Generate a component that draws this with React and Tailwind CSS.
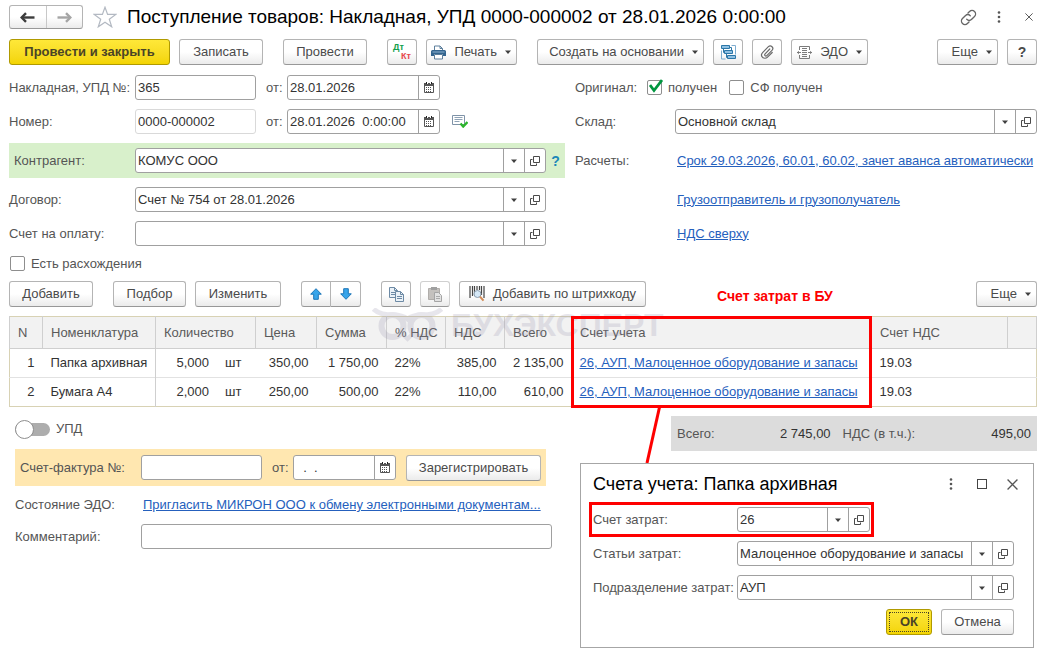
import { useState } from 'react';
import clsx from 'clsx';

const rows = [
    { n: 1, name: 'Папка архивная', qty: '5,000', unit: 'шт', price: '350,00', sum: '1 750,00', rate: '22%', vat: '385,00', total: '2 135,00', account: '26, АУП, Малоценное оборудование и запасы', vatAccount: '19.03' },
    { n: 2, name: 'Бумага А4', qty: '2,000', unit: 'шт', price: '250,00', sum: '500,00', rate: '22%', vat: '110,00', total: '610,00', account: '26, АУП, Малоценное оборудование и запасы', vatAccount: '19.03' },
];

const columns = [
    { title: 'N', width: 'w-[33px]' },
    { title: 'Номенклатура', width: 'w-[113px]' },
    { title: 'Количество', width: 'w-[100px]' },
    { title: 'Цена', width: 'w-[61px]' },
    { title: 'Сумма', width: 'w-[70px]' },
    { title: '% НДС', width: 'w-[59px]' },
    { title: 'НДС', width: 'w-[59px]' },
    { title: 'Всего', width: 'w-[67px]' },
    { title: 'Счет учета', width: '' },
    { title: 'Счет НДС', width: 'w-[136px]' },
    { title: '', width: 'w-[29px]' },
];

/* ---------- icons ---------- */

function Caret() {
    return (
        <svg width="6" height="4" viewBox="0 0 6 4" className="shrink-0">
            <path d="M0 0.5h6L3 4z" fill="#404040" />
        </svg>
    );
}

function OpenIcon() {
    return (
        <svg width="10" height="10" viewBox="0 0 10 10" fill="none" stroke="#4a4a4a">
            <path d="M3.5 0.5h6v6h-6z" />
            <path d="M2.500 3.500h-2v6h6v-2" />
        </svg>
    );
}

function CalendarIcon() {
    return (
        <svg width="10" height="11" viewBox="0 0 10 11">
            <path d="M0.5 2.5h9v8h-9z" fill="#fff" stroke="#555" />
            <path d="M0 1h10v3H0z" fill="#555" />
            <path d="M2 0h1v2H2zM7 0h1v2H7z" fill="#222" />
            <path d="M3 1h1v1H3zM6 1h1v1H6z" fill="#fff" />
            <path d="M2 5h1v1H2zM4 5h1v1H4zM6 5h1v1H6zM2 7h1v1H2zM4 7h1v1H4zM6 7h1v1H6zM2 9h1v1H2zM4 9h1v1H4zM6 9h1v1H6z" fill="#555" />
        </svg>
    );
}

function ArrowIcon({ left, color }) {
    return (
        <svg width="15" height="11" viewBox="0 0 15 11" className={clsx(!left && 'rotate-180')} fill="none" stroke={color} strokeWidth="2.4">
            <path d="M2 5.5H14.500" />
            <path d="M6 1.2L1.700 5.500L6 9.800" />
        </svg>
    );
}

function StarIcon() {
    return (
        <svg width="24" height="22" viewBox="0 0 24 22" fill="none" stroke="#b3b9c2" strokeWidth="1.2">
            <path d="M12 1.200l2.600 7.200h8.200l-6.500 4.800 2.400 7.600L12 16.200l-6.700 4.600 2.400-7.600L1.200 8.400h8.200z" />
        </svg>
    );
}

function LinkIcon() {
    return (
        <svg width="17" height="17" viewBox="0 0 24 24" fill="none" stroke="#666" strokeWidth="1.9" strokeLinecap="round">
            <path d="M9.500 14.500a5 5 0 0 0 7 0l4-4a4.900 4.900 0 0 0-7-7l-2.200 2.200" />
            <path d="M14.500 9.500a5 5 0 0 0-7 0l-4 4a4.900 4.900 0 0 0 7 7l2.200-2.200" />
        </svg>
    );
}

function DotsIcon() {
    return (
        <svg width="4" height="12" viewBox="0 0 4 12" fill="#555">
            <circle cx="2" cy="1.500" r="1.300" />
            <circle cx="2" cy="6" r="1.300" />
            <circle cx="2" cy="10.500" r="1.300" />
        </svg>
    );
}

function CloseIcon({ size = 8 }) {
    return (
        <svg width={size} height={size} viewBox="0 0 10 10" stroke="#555" strokeWidth="1.200">
            <path d="M0.500 0.500l9 9M9.500 0.500l-9 9" />
        </svg>
    );
}

function DtKtIcon() {
    return (
        <span className="relative block h-[18px] w-[18px] text-[9px] leading-[9px] font-bold">
            <span className="absolute top-0 left-0 text-[#12a04c]">Дт</span>
            <span className="absolute right-0 bottom-0 text-[#e8474c]">Кт</span>
        </span>
    );
}

function PrinterIcon() {
    return (
        <svg width="15" height="15" viewBox="0 0 15 15" className="shrink-0">
            <path d="M3.500 6V1h5.500l2.500 2.500V6" fill="#fff" stroke="#5d7f9c" />
            <path d="M9 1v2.500h2.500" fill="none" stroke="#5d7f9c" />
            <path d="M1.500 5h12A1.500 1.500 0 0 1 15 6.500V11h-3V9H3v2H0V6.500A1.500 1.500 0 0 1 1.500 5z" fill="#33658f" />
            <path d="M3.500 9.500h8v4.500h-8z" fill="#fff" stroke="#5d7f9c" />
            <path d="M1.500 7h12" stroke="#8fb3d0" />
        </svg>
    );
}

function StructureIcon() {
    return (
        <svg width="15" height="15" viewBox="0 0 15 15" fill="none">
            <path d="M0.500 5.500v8.500h4M10.500 0.500h4v9" stroke="#7eadd0" />
            <path d="M2.500 4v3.500H4M5.500 9v3.500H7M9 2.500h1.500V6" stroke="#2c77a8" />
            <path d="M0.500 0.500h8v3h-8zM3.500 5.500h8v3h-8zM6.500 10.500h8v3h-8z" fill="#8fc0e2" stroke="#2c77a8" />
        </svg>
    );
}

function ClipIcon() {
    return (
        <svg width="14" height="14" viewBox="0 0 14 14" fill="none" stroke="#6a6a6a" strokeWidth="1.200" strokeLinecap="round">
            <path d="M9.800 4L5.100 8.900a1.200 1.200 0 0 0 1.700 1.700L12 5.300a2.500 2.500 0 0 0-3.600-3.600L2.600 7.600a3.300 3.300 0 0 0 4.700 4.700L12.200 7.500" />
        </svg>
    );
}

function EdoIcon() {
    return (
        <svg width="15" height="15" viewBox="0 0 15 15" fill="none" stroke="#7b7b7b" className="shrink-0">
            <path d="M2.500 5V1.500h10V5M2.500 10v3.500h10V10" />
            <path d="M5 3.500h5M5 5.500h5M5 9.500h5M5 11.500h5" />
            <path d="M0 7.500h4M5 7.500h5M11 7.500h4" strokeWidth="1.200" />
            <path d="M2 5.800v3.400L0 7.500zM13 5.800v3.400l2-1.700z" fill="#7b7b7b" stroke="none" />
        </svg>
    );
}

function PostedIcon() {
    return (
        <svg width="16" height="13" viewBox="0 0 16 13" fill="none">
            <path d="M0.500 0.500h12v9h-12z" fill="#fff" stroke="#7f93a8" />
            <path d="M2.500 2.500h8M2.500 4.500h8M2.500 6.500h5" stroke="#8fa2b5" />
            <path d="M8.500 8.500l2.700 3L15.500 7" stroke="#2db52d" strokeWidth="2.400" />
        </svg>
    );
}

function MoveArrow({ down }) {
    return (
        <svg width="12" height="12" viewBox="0 0 12 12" className={clsx(down && 'rotate-180')}>
            <path d="M6 0.700L11.300 6.200H8.300V11.300H3.700V6.200H0.700z" fill="#38a5ea" stroke="#1d76b8" strokeWidth="1" strokeLinejoin="round" />
        </svg>
    );
}

function CopyIcon() {
    return (
        <svg width="17" height="17" viewBox="0 0 17 17" fill="#eaf1f7" stroke="#6d8aa5">
            <path d="M1.500 1.500h5l3 3v7h-8z" />
            <path d="M6.500 1.500v3h3M3 6.500h4M3 8.500h4" fill="none" />
            <path d="M7.500 5.500h5l3 3v7h-8z" />
            <path d="M12.500 5.500v3h3M9 10.500h5M9 12.500h5" fill="none" />
        </svg>
    );
}

function PasteIcon() {
    return (
        <svg width="16" height="16" viewBox="0 0 16 16">
            <path d="M1.500 2.500h11v11h-11z" fill="#c4c1be" stroke="#b0adaa" />
            <path d="M4 1h6v3H4z" fill="#a0a0a0" />
            <path d="M7.500 6.500h4l3 3v6h-7z" fill="#e2e2e2" stroke="#a5a5a5" />
            <path d="M9 10.500h4M9 12.500h4" stroke="#aaa" />
        </svg>
    );
}

function BarcodeIcon() {
    return (
        <svg width="16" height="16" viewBox="0 0 16 16" className="shrink-0">
            <path d="M1 0v12M3.500 0v10M5.500 0v9M8 0v4M10.500 0v4M12.500 0v9M15 0v12" stroke="#444" strokeWidth="1.200" />
            <circle cx="8.500" cy="8" r="3.500" fill="#d5e8f7" stroke="#8a9cad" />
            <path d="M11 10.700l3.500 4" stroke="#d08a55" strokeWidth="2" />
        </svg>
    );
}

function Watermark() {
    return (
        <div aria-hidden="true" className="pointer-events-none absolute -top-2 left-[363px] flex items-start gap-2 text-[#8d87a5] opacity-20">
            <svg width="71" height="34" viewBox="0 0 70 34" fill="none" stroke="currentColor" strokeWidth="6">
                <path d="M1 1c5 5 11 6 20 6 6 0 10 1 14 4 4-3 8-4 14-4 9 0 15-1 20-6" strokeWidth="5" />
                <circle cx="20" cy="18" r="11" />
                <circle cx="49" cy="18" r="11" />
                <path d="M30 26l5 5 5-5" strokeWidth="4" />
            </svg>
            <span className="text-[32px] leading-[34px] font-bold">БУХЭКСПЕРТ</span>
        </div>
    );
}

/* ---------- controls ---------- */

function Button({ children, className, primary, menu, ...props }) {
    return (
        <button
            type="button"
            className={clsx(
                'flex h-[26px] shrink-0 items-center gap-2 rounded-[3px] border leading-[16px] whitespace-nowrap',
                primary
                    ? 'border-[#b09a00] bg-linear-to-b from-[#ffe838] to-[#f3d400] font-bold text-[#4a4426]'
                    : 'border-[#b4b4b4] border-b-[#989898] bg-linear-to-b from-white from-50% to-[#ebebeb] text-[#4a4a4a]',
                menu ? 'justify-end pr-[5px]' : 'justify-center',
                className
            )}
            {...props}
        >
            {children}
            {menu && <Caret />}
        </button>
    );
}

function Field({ label, width = 'w-[126px]', children, id, className }) {
    return (
        <div className={clsx('flex items-center', className)}>
            <label htmlFor={id} className={clsx('shrink-0 whitespace-nowrap', width)}>{label}</label>
            {children}
        </div>
    );
}

function TextInput({ className, ...props }) {
    return (
        <input
            type="text"
            className={clsx('h-[25px] rounded-[3px] border bg-white px-0.5 text-[#333] outline-none', className)}
            {...props}
        />
    );
}

function DateInput({ id, value, className }) {
    return (
        <div className={clsx('flex h-[25px] shrink-0 rounded-[3px] border border-[#a0a0a0] bg-white', className)}>
            <input id={id} type="text" defaultValue={value} className="w-full min-w-0 px-0.5 whitespace-pre text-[#333] outline-none" />
            <button type="button" aria-label="Выбрать дату" className="flex w-[21px] shrink-0 items-center justify-center border-l border-[#a0a0a0]">
                <CalendarIcon />
            </button>
        </div>
    );
}

function SelectInput({ id, value, className }) {
    return (
        <div className={clsx('flex h-[25px] rounded-[3px] border border-[#a0a0a0] bg-white', className)}>
            <div className="relative min-w-0 flex-1">
                <select id={id} defaultValue={value} className="h-full w-full appearance-none px-0.5 text-[#333] outline-none">
                    <option value={value}>{value}</option>
                </select>
                <span className="pointer-events-none absolute inset-y-0 right-0 flex w-[21px] items-center justify-center border-l border-[#a0a0a0]">
                    <Caret />
                </span>
            </div>
            <button type="button" aria-label="Открыть" className="flex w-[21px] shrink-0 items-center justify-center border-l border-[#a0a0a0]">
                <OpenIcon />
            </button>
        </div>
    );
}

function Checkbox({ label, defaultChecked = false }) {
    const [checked, setChecked] = useState(defaultChecked);
    return (
        <label className="flex items-center gap-1.5">
            <span className="relative flex">
                <input
                    type="checkbox"
                    checked={checked}
                    onChange={(e) => setChecked(e.target.checked)}
                    className="h-[15px] w-[15px] appearance-none rounded-[2px] border border-[#8e8e8e] bg-white"
                />
                {checked && (
                    <svg width="14" height="14" viewBox="0 0 14 14" className="pointer-events-none absolute -top-px left-0.5" fill="none" stroke="#00963f" strokeWidth="2.800">
                        <path d="M1 6l4 5.500L13 1" />
                    </svg>
                )}
            </span>
            {label}
        </label>
    );
}

function Link({ children, className }) {
    return <a href="#" className={clsx('text-[#2560bd] underline', className)}>{children}</a>;
}

/* ---------- page parts ---------- */

function TitleBar() {
    return (
        <header className="flex h-6 items-center">
            <div className="flex h-6 w-[74px] rounded-[3px] border border-[#b4b4b4] border-b-[#989898] bg-linear-to-b from-white from-50% to-[#ebebeb]">
                <button type="button" aria-label="Назад" className="flex flex-1 items-center justify-center border-r border-[#c8c8c8]">
                    <ArrowIcon left color="#3c3c3c" />
                </button>
                <button type="button" aria-label="Вперед" className="flex flex-1 items-center justify-center">
                    <ArrowIcon color="#a5a5a5" />
                </button>
            </div>
            <button type="button" aria-label="В избранное" className="mx-2.5">
                <StarIcon />
            </button>
            <h1 className="text-[19px] leading-6 whitespace-nowrap text-black">Поступление товаров: Накладная, УПД 0000-000002 от 28.01.2026 0:00:00</h1>
            <div className="ml-auto flex items-center gap-5 pr-1">
                <button type="button" aria-label="Ссылка"><LinkIcon /></button>
                <button type="button" aria-label="Меню"><DotsIcon /></button>
                <button type="button" aria-label="Закрыть" className="ml-1"><CloseIcon /></button>
            </div>
        </header>
    );
}

function Toolbar() {
    return (
        <div className="mt-2.5 flex items-center gap-5">
            <div className="flex gap-[9px]">
                <Button primary className="w-[161px]">Провести и закрыть</Button>
                <Button className="w-[84px]">Записать</Button>
            </div>
            <Button className="w-[84px]">Провести</Button>
            <div className="flex gap-[9px]">
                <Button className="w-[30px]"><DtKtIcon /></Button>
                <Button menu className="w-[91px]"><PrinterIcon />Печать</Button>
            </div>
            <div className="flex gap-[9px]">
                <Button menu className="w-[167px]">Создать на основании</Button>
                <Button className="w-[30px]" aria-label="Структура подчиненности"><StructureIcon /></Button>
                <Button className="w-[30px]" aria-label="Файлы"><ClipIcon /></Button>
                <Button menu className="w-[77px]"><EdoIcon />ЭДО</Button>
            </div>
            <div className="ml-auto flex gap-[9px]">
                <Button menu className="w-[61px]">Еще</Button>
                <Button className="w-[30px] text-[14px] font-bold">?</Button>
            </div>
        </div>
    );
}

function DocumentForm() {
    return (
        <div className="mt-2.5 flex gap-2.5">
            <div className="flex w-[556px] shrink-0 flex-col gap-[9px]">
                <Field label="Накладная, УПД №:" id="invoice">
                    <TextInput id="invoice" defaultValue="365" className="w-[121px] border-[#a0a0a0]" />
                    <label htmlFor="invoiceDate" className="w-[31px] pl-2.5">от:</label>
                    <DateInput id="invoiceDate" value="28.01.2026" className="w-[153px]" />
                </Field>
                <Field label="Номер:" id="number">
                    <TextInput id="number" defaultValue="0000-000002" className="w-[121px] border-[#d9d9d9]" />
                    <label htmlFor="numberDate" className="w-[31px] pl-2.5">от:</label>
                    <DateInput id="numberDate" value="28.01.2026  0:00:00" className="w-[153px]" />
                    <span className="ml-3"><PostedIcon /></span>
                </Field>
                <Field label="Контрагент:" id="partner" width="w-[121px]" className="h-[35px] bg-[#d8f0cb] pl-[5px]">
                    <SelectInput id="partner" value="КОМУС ООО" className="w-[411px] shrink-0" />
                    <button type="button" className="flex-1 text-[14px] font-bold text-[#1b87b8]">?</button>
                </Field>
                <Field label="Договор:" id="contract">
                    <SelectInput id="contract" value="Счет № 754 от 28.01.2026" className="w-[411px]" />
                </Field>
                <Field label="Счет на оплату:" id="bill">
                    <SelectInput id="bill" value="" className="w-[411px]" />
                </Field>
                <div className="flex h-[17px] items-center pl-px">
                    <Checkbox label="Есть расхождения" />
                </div>
            </div>
            <div className="flex min-w-0 flex-1 flex-col gap-[9px]">
                <div className="flex h-[25px] items-center">
                    <span className="w-[72px]">Оригинал:</span>
                    <div className="flex gap-3">
                        <Checkbox label="получен" defaultChecked />
                        <Checkbox label="СФ получен" />
                    </div>
                </div>
                <Field label="Склад:" id="warehouse" width="w-[100px]">
                    <SelectInput id="warehouse" value="Основной склад" className="flex-1" />
                </Field>
                <div className="flex h-[35px] items-center">
                    <span className="w-[102px] shrink-0">Расчеты:</span>
                    <Link className="whitespace-nowrap">Срок 29.03.2026, 60.01, 60.02, зачет аванса автоматически</Link>
                </div>
                <div className="flex h-[25px] items-center pl-[102px]"><Link>Грузоотправитель и грузополучатель</Link></div>
                <div className="flex h-[25px] items-center pl-[102px]"><Link>НДС сверху</Link></div>
            </div>
        </div>
    );
}

function ItemsToolbar() {
    return (
        <div className="mt-[9px] flex items-center gap-5">
            <Button className="w-[84px]">Добавить</Button>
            <div className="flex gap-[9px]">
                <Button className="w-[73px]">Подбор</Button>
                <Button className="w-[86px]">Изменить</Button>
            </div>
            <div className="flex">
                <Button className="w-[30px] rounded-r-none" aria-label="Вверх"><MoveArrow /></Button>
                <Button className="w-[30px] rounded-l-none border-l-0" aria-label="Вниз"><MoveArrow down /></Button>
            </div>
            <div className="flex gap-[9px]">
                <Button className="w-[30px]" aria-label="Копировать"><CopyIcon /></Button>
                <Button className="w-[30px] border-[#d0d0d0]" aria-label="Вставить"><PasteIcon /></Button>
                <Button className="w-[187px]"><BarcodeIcon />Добавить по штрихкоду</Button>
            </div>
            <div className="flex flex-1 justify-between">
                <span className="pt-1 pl-[51px] text-[14px] leading-[22px] font-bold text-[#fe0000]">Счет затрат в БУ</span>
                <Button menu className="w-[61px]">Еще</Button>
            </div>
        </div>
    );
}

function ItemsTable() {
    return (
        <div className="relative mt-[9px]">
            <table className="w-full table-fixed border-collapse border border-[#d8d2b4] text-[#333]">
                <thead>
                    <tr className="h-8 bg-[#f2f2f2] text-left text-[#5a5a5a]">
                        {columns.map((col) => (
                            <th key={col.title} className={clsx('border-x border-b border-[#cfcfcf] px-2 font-normal whitespace-nowrap', col.width)}>{col.title}</th>
                        ))}
                    </tr>
                </thead>
                <tbody>
                    {rows.map((row) => (
                        <tr key={row.n} className="h-[29px] border-b border-[#e2e2e2] whitespace-nowrap last:border-[#d8d2b4]">
                            <td className="px-2 text-right">{row.n}</td>
                            <td className="border-r border-[#cfcfcf] px-2">{row.name}</td>
                            <td className="px-2">
                                <div className="flex">
                                    <span className="w-[45px] text-right">{row.qty}</span>
                                    <span className="pl-4">{row.unit}</span>
                                </div>
                            </td>
                            <td className="px-2 text-right">{row.price}</td>
                            <td className="px-2 text-right">{row.sum}</td>
                            <td className="px-2">{row.rate}</td>
                            <td className="px-2 text-right">{row.vat}</td>
                            <td className="px-2 text-right">{row.total}</td>
                            <td className="px-2"><Link>{row.account}</Link></td>
                            <td className="px-2">{row.vatAccount}</td>
                            <td></td>
                        </tr>
                    ))}
                </tbody>
            </table>
            <Watermark />
            {/* callout frame over the account column and its pointer to the dialog */}
            <div className="pointer-events-none absolute top-0 right-[165px] -bottom-px left-[562px] border-3 border-[#fe0000]">
                <svg width="18" height="58" viewBox="0 0 18 58" className="absolute top-full left-[70px]">
                    <path d="M16 0L3 58" stroke="#fe0000" strokeWidth="3" />
                </svg>
            </div>
        </div>
    );
}

function InvoicePanel() {
    const [upd, setUpd] = useState(false);
    return (
        <div className="flex w-[543px] shrink-0 flex-col gap-2.5 pt-[3px] pl-1.5">
            <label className="flex h-5 items-center gap-1.5 self-start">
                <input type="checkbox" role="switch" checked={upd} onChange={(e) => setUpd(e.target.checked)} className="sr-only" />
                <span className="flex h-[13px] w-[35px] items-center rounded-full bg-[#adadad]">
                    <span className={clsx('h-[19px] w-[19px] rounded-full border border-[#8e8e8e] bg-white', upd && 'ml-auto')}></span>
                </span>
                УПД
            </label>
            <div className="flex h-[37px] w-[531px] items-center bg-[#ffe7b0] pl-[5px]">
                <label htmlFor="facture" className="w-[121px]">Счет-фактура №:</label>
                <TextInput id="facture" className="w-[121px] border-[#a0a0a0]" />
                <label htmlFor="factureDate" className="w-[31px] pl-2.5">от:</label>
                <DateInput id="factureDate" value="  .  ." className="w-[103px]" />
                <Button className="ml-2.5 w-[135px]">Зарегистрировать</Button>
            </div>
            <div className="flex h-[18px] items-center">
                <span className="w-[128px] shrink-0">Состояние ЭДО:</span>
                <Link className="whitespace-nowrap">Пригласить МИКРОН ООО к обмену электронными документам...</Link>
            </div>
            <Field label="Комментарий:" id="comment">
                <TextInput id="comment" className="flex-1 border-[#a0a0a0]" />
            </Field>
        </div>
    );
}

function AccountsDialog() {
    return (
        <section role="dialog" aria-label="Счета учета" className="mr-[3px] w-[454px] border border-[#a6a6a6] bg-white pr-[19px] pb-3 pl-3">
            <div className="flex h-[38px] items-center justify-between pt-0.5">
                <h2 className="text-[18px] leading-6 text-black">Счета учета: Папка архивная</h2>
                <div className="-mr-1 flex items-center gap-5">
                    <button type="button" aria-label="Меню"><DotsIcon /></button>
                    <button type="button" aria-label="Развернуть" className="ml-1 h-[10px] w-[10px] border border-[#444]"></button>
                    <button type="button" aria-label="Закрыть"><CloseIcon size={11} /></button>
                </div>
            </div>
            <div className="-ml-1 w-[285px] border-3 border-[#fe0000] py-0.5 pl-px">
                <Field label="Счет затрат:" id="costAccount" width="w-[144px]">
                    <SelectInput id="costAccount" value="26" className="w-[133px]" />
                </Field>
            </div>
            <div className="mt-1 flex flex-col gap-[9px]">
                <Field label="Статьи затрат:" id="costItem" width="w-[144px]">
                    <SelectInput id="costItem" value="Малоценное оборудование и запасы" className="flex-1" />
                </Field>
                <Field label="Подразделение затрат:" id="department" width="w-[144px]">
                    <SelectInput id="department" value="АУП" className="flex-1" />
                </Field>
                <div className="flex justify-end gap-[9px]">
                    <Button primary className="w-[46px] outline-1 -outline-offset-4 outline-[#4a4426] outline-dotted">ОК</Button>
                    <Button className="w-[73px]">Отмена</Button>
                </div>
            </div>
        </section>
    );
}

export default function App() {
    return (
        <main className="bg-white pt-[5px] pr-1 pl-[9px] font-['Liberation_Sans',Arial,sans-serif] text-[13px] leading-[18px] text-[#555]">
            <TitleBar />
            <Toolbar />
            <DocumentForm />
            <ItemsToolbar />
            <ItemsTable />
            <div className="mt-[9px] flex justify-between">
                <InvoicePanel />
                <div className="flex flex-col items-end gap-3">
                    <div className="flex h-[35px] w-[366px] items-center bg-[#dcdcdc] px-1.5">
                        <span>Всего:</span>
                        <output className="flex-1 text-right text-[#333]">2 745,00</output>
                        <span className="pl-3">НДС (в т.ч.):</span>
                        <output className="flex-1 text-right text-[#333]">495,00</output>
                    </div>
                    <AccountsDialog />
                </div>
            </div>
        </main>
    );
}
